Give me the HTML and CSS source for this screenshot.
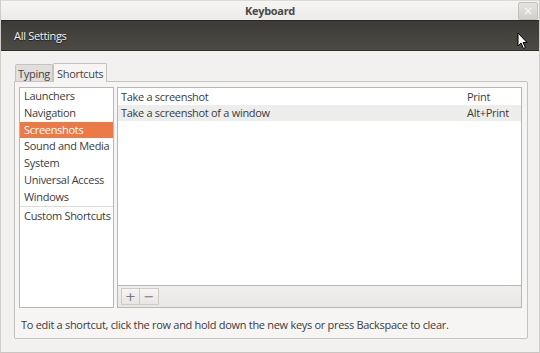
FILE: index.html
```html
<!DOCTYPE html>
<html lang="en">
<head>
  <meta charset="UTF-8">
  <title>Keyboard</title>
  <link rel="stylesheet" href="styles.css">
</head>
<body>
  <div class="window">
    <div class="titlebar">
      <span class="title">Keyboard</span>
      <button class="close-btn">&times;</button>
    </div>

    <div class="toolbar">
      <span class="all-settings">All Settings</span>
    </div>

    <div class="content">
      <div class="tabs">
        <div class="tab">Typing</div>
        <div class="tab active">Shortcuts</div>
      </div>

      <div class="notebook">
        <div class="panes">
          <ul class="categories">
            <li>Launchers</li>
            <li>Navigation</li>
            <li class="selected">Screenshots</li>
            <li>Sound and Media</li>
            <li>System</li>
            <li>Universal Access</li>
            <li class="last">Windows</li>
            <li>Custom Shortcuts</li>
          </ul>

          <div class="shortcuts">
            <div class="rows">
              <div class="row">
                <span>Take a screenshot</span>
                <span class="accel">Print</span>
              </div>
              <div class="row current">
                <span>Take a screenshot of a window</span>
                <span class="accel">Alt+Print</span>
              </div>
            </div>
            <div class="list-toolbar">
              <button class="small-btn">+</button>
              <button class="small-btn">&minus;</button>
            </div>
          </div>
        </div>

        <p class="hint">To edit a shortcut, click the row and hold down the new keys or press Backspace to clear.</p>
      </div>
    </div>

    <!-- указатель мыши поверх панели -->
    <svg class="cursor" width="12" height="18" viewBox="0 0 12 18">
      <path d="M1 1 L1 14 L4 11 L6.5 16.5 L8.5 15.5 L6 10.5 L10 10.5 Z" fill="white" stroke="black" stroke-width="1" stroke-linejoin="round"/>
    </svg>
  </div>
</body>
</html>
```

FILE: styles.css
```css
:root {
  --bg: #f2f1f0;
  --frame: #c6c3bf;
  --text: #3c3c3c;
  --orange: #ec7a47;
}

* {
  margin: 0;
  padding: 0;
  box-sizing: border-box;
}

body {
  font-family: 'Open Sans', 'DejaVu Sans', sans-serif;
  font-size: 11px;
  letter-spacing: -0.3px;
  color: var(--text);
  background: #d8d6d2;
}

.window {
  width: 540px;
  height: 353px;
  background: var(--bg);
  position: relative;
  overflow: hidden;
  border-left: 1px solid #d0cdc9;
  border-right: 1px solid #d0cdc9;
  border-bottom: 1px solid #c9c6c2;
  display: flex;
  flex-direction: column;
}

.titlebar {
  height: 20px;
  display: flex;
  align-items: center;
  justify-content: center;
  background: linear-gradient(#f6f5f4, #edebe9);
  border-top: 1px solid #dcdad6;
  position: relative;
}

.title {
  font-weight: 700;
  font-size: 11px;
  color: #4a4a47;
}

.close-btn {
  position: absolute;
  top: 1px;
  right: 1px;
  width: 20px;
  height: 18px;
  border: 1px solid #c4c1bc;
  border-radius: 2px;
  background: linear-gradient(#e6e4e1, #d2cfcb);
  color: #fafafa;
  font-size: 12px;
  line-height: 14px;
  font-family: 'DejaVu Sans', sans-serif;
}

.toolbar {
  height: 31px;
  display: flex;
  align-items: center;
  padding-left: 13px;
  background: linear-gradient(#3c3b37, #4b4a45);
  border-top: 1px solid #2a2926;
  border-bottom: 1px solid #2f2e2b;
}

.all-settings {
  color: #f2f1f0;
  font-size: 11px;
  text-shadow: 0 1px 1px rgba(0,0,0,0.6);
}

.content {
  flex: 1;
  padding: 11px 11px 13px 13px;
  display: flex;
  flex-direction: column;
}

.tabs {
  display: flex;
  align-items: flex-end;
  padding-left: 1px;
  height: 19px;
}

.tab {
  height: 17px;
  padding: 0 2px;
  display: flex;
  align-items: center;
  background: #e1dfdb;
  border: 1px solid var(--frame);
  border-bottom: none;
  border-radius: 2px 2px 0 0;
  color: #444;
}

.tab.active {
  height: 19px;
  background: #f6f5f4;
  padding: 0 3px;
  margin-bottom: -1px;
  position: relative;
}

.notebook {
  flex: 1;
  background: #f6f5f4;
  border: 1px solid var(--frame);
  border-radius: 0 2px 2px 2px;
  padding: 5px 5px 0 4px;
  display: flex;
  flex-direction: column;
}

.panes {
  display: flex;
  gap: 3px;
  height: 221px;
}

.categories {
  list-style: none;
  width: 95px;
  background: #fff;
  border: 1px solid #bab7b2;
}

.categories li {
  height: 16.8px;
  line-height: 16.8px;
  padding-left: 4px;
  white-space: nowrap;
}

.categories li.selected {
  background: var(--orange);
  color: #fff;
}

.categories li.last {
  border-bottom: 1px solid #dcdad6;
  margin-bottom: 1px;
  height: 18px;
}

.shortcuts {
  flex: 1;
  border: 1px solid #bab7b2;
  display: flex;
  flex-direction: column;
}

.rows {
  flex: 1;
  background: #fff;
}

.row {
  height: 16.5px;
  display: flex;
  justify-content: space-between;
  align-items: center;
  padding: 0 8px 0 3px;
}

.row.current {
  background: #ededec;
}

.accel {
  width: 46px;
}

.list-toolbar {
  height: 22px;
  border-top: 1px solid #bab7b2;
  background: linear-gradient(#f0efed, #e9e7e4);
  display: flex;
  align-items: center;
  padding-left: 3px;
}

.small-btn {
  width: 19px;
  height: 17px;
  border: 1px solid #cfccc8;
  background: linear-gradient(#f6f5f4, #e8e6e3);
  color: #777;
  font-size: 13px;
  line-height: 13px;
  font-family: 'DejaVu Sans', sans-serif;
}

.small-btn + .small-btn {
  border-left: none;
}

.hint {
  margin-top: 9px;
  padding-left: 2px;
  white-space: nowrap;
}

.cursor {
  position: absolute;
  left: 516px;
  top: 32px;
}
```
